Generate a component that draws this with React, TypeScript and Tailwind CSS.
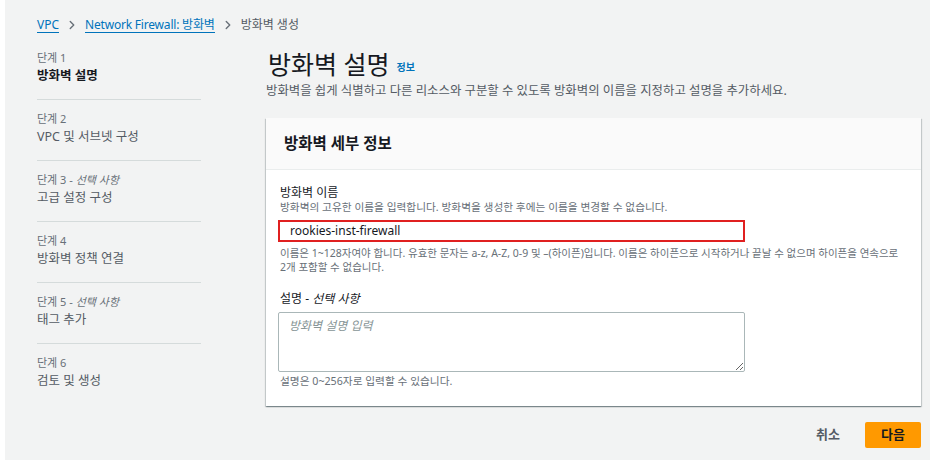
import { ChevronRight } from "lucide-react";

const steps = [
  { step: "단계 1", title: "방화벽 설명", active: true },
  { step: "단계 2", title: "VPC 및 서브넷 구성" },
  { step: "단계 3", optional: true, title: "고급 설정 구성" },
  { step: "단계 4", title: "방화벽 정책 연결" },
  { step: "단계 5", optional: true, title: "태그 추가" },
  { step: "단계 6", title: "검토 및 생성" },
];

function Breadcrumbs() {
  return (
    <nav className="flex items-center h-[20px] text-[12px] text-[#545b64]">
      <a className="text-[#0073bb] border-b border-[#0073bb] leading-[15px]">VPC</a>
      <ChevronRight className="mx-[6px] text-[#687078]" size={14} strokeWidth={2.4} />
      <a className="text-[#0073bb] border-b border-[#0073bb] leading-[15px] tracking-[-0.2px]">
        Network Firewall: 방화벽
      </a>
      <ChevronRight className="mx-[6px] text-[#687078]" size={14} strokeWidth={2.4} />
      <span>방화벽 생성</span>
    </nav>
  );
}

function StepNav() {
  return (
    <ol className="w-[164px] shrink-0 list-none">
      {steps.map((s, i) => (
        <li
          key={s.step}
          className={
            i < steps.length - 1
              ? "pb-[14px] mb-[12px] border-b border-[#d5dbdb]"
              : ""
          }
        >
          <div className="text-[11px] leading-[14px] text-[#687078]">
            {s.step}
            {s.optional && (
              <>
                {" - "}
                <i>선택 사항</i>
              </>
            )}
          </div>
          <div
            className={
              s.active
                ? "mt-[2px] text-[12.5px] leading-[18px] font-bold text-[#16191f]"
                : "mt-[2px] text-[12.5px] leading-[18px] text-[#545b64]"
            }
          >
            {s.title}
          </div>
        </li>
      ))}
    </ol>
  );
}

function DetailsCard() {
  return (
    <section className="bg-white shadow-[0_1px_1px_0_rgba(0,28,36,0.3),1px_1px_1px_0_rgba(0,28,36,0.15),-1px_1px_1px_0_rgba(0,28,36,0.15)]">
      <header className="h-[52px] px-[18px] flex items-center bg-[#fafafa] border-b border-[#eaeded]">
        <h2 className="text-[15.5px] font-bold text-[#16191f]">방화벽 세부 정보</h2>
      </header>
      <div className="px-[12px] pt-[15px] pb-[18px]">
        <div className="pl-[2px] text-[12px] leading-[15px] text-[#16191f]">방화벽 이름</div>
        <div className="pl-[2px] text-[10.7px] leading-[14px] text-[#687078]">
          방화벽의 고유한 이름을 입력합니다. 방화벽을 생성한 후에는 이름을 변경할 수 없습니다.
        </div>
        <div className="mt-[6px] w-[467px] h-[22px] border-2 border-[#e02020] flex items-center px-[10px] text-[12px] text-[#16191f]">
          rookies-inst-firewall
        </div>
        <div className="mt-[4px] mr-[-6px] pl-[2px] text-[10.5px] leading-[14px] text-[#687078] break-keep">
          이름은 1~128자여야 합니다. 유효한 문자는 a-z, A-Z, 0-9 및 –(하이픈)입니다. 이름은 하이픈으로
          시작하거나 끝날 수 없으며 하이픈을 연속으로 2개 포함할 수 없습니다.
        </div>

        <div className="mt-[17px] pl-[2px] text-[12px] leading-[15px] text-[#16191f]">
          설명 - <i>선택 사항</i>
        </div>
        <textarea
          className="mt-[6px] block w-[467px] h-[60px] border border-[#aab7b8] rounded-[2px] px-[10px] py-[4px] text-[12px] placeholder:italic placeholder:text-[#879596] outline-none"
          placeholder="방화벽 설명 입력"
        />
        <div className="mt-[2px] pl-[2px] text-[10.7px] leading-[14px] text-[#687078]">
          설명은 0~256자로 입력할 수 있습니다.
        </div>
      </div>
    </section>
  );
}

export default function App() {
  return (
    <div
      className="flex w-[930px] h-[460px] overflow-hidden bg-white"
      style={{ fontFamily: '"Noto Sans", "Noto Sans CJK KR", sans-serif' }}
    >
      <div className="w-[5px] shrink-0 bg-white" />
      <div className="flex-1 bg-[#f2f3f3] pl-[32px] pr-[9px] pt-[15px]">
        <Breadcrumbs />
        <div className="flex mt-[16px]">
          <StepNav />
          <main className="ml-[65px] flex-1">
            <div className="flex items-end mt-[-3px]">
              <h1 className="text-[25px] leading-[32px] text-[#16191f] ml-[2px]">방화벽 설명</h1>
              <a className="ml-[7px] mb-[5px] text-[10px] font-bold text-[#0073bb]">정보</a>
            </div>
            <p className="mt-[2px] text-[12.4px] leading-[18px] text-[#545b64]">
              방화벽을 쉽게 식별하고 다른 리소스와 구분할 수 있도록 방화벽의 이름을 지정하고 설명을 추가하세요.
            </p>
            <div className="mt-[18px]">
              <DetailsCard />
            </div>
            <div className="flex justify-end items-center mt-[16px]">
              <button className="mr-[25px] text-[13px] font-bold text-[#545b64]">취소</button>
              <button className="w-[56px] h-[26px] bg-[#ff9900] rounded-[2px] text-[13px] font-bold text-[#16191f]">
                다음
              </button>
            </div>
          </main>
        </div>
      </div>
    </div>
  );
}
